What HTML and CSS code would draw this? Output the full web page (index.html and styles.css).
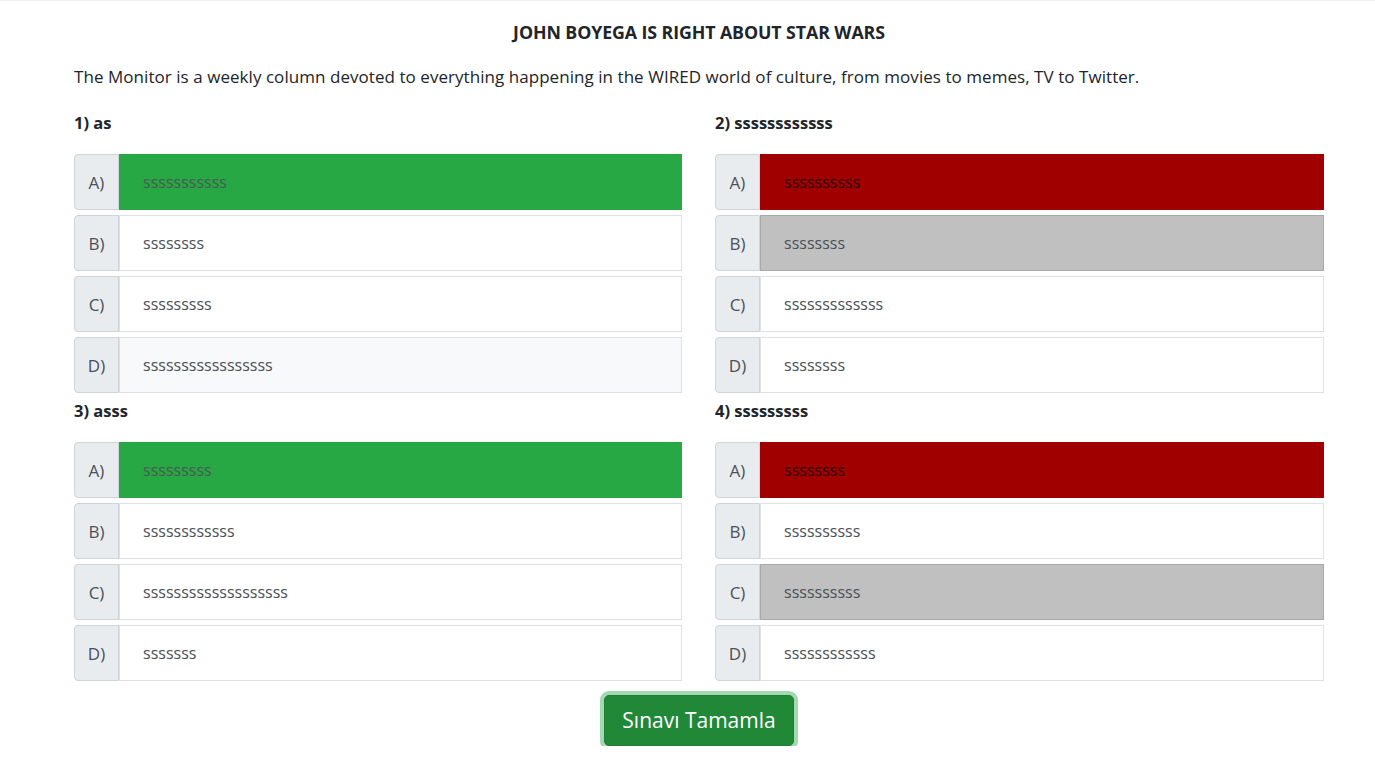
FILE: index.html
```html
<!DOCTYPE html>
<html lang="tr">
<head>
<meta charset="utf-8">
<title>Quiz</title>
<link rel="stylesheet" href="styles.css">
</head>
<body>
<div class="page">
  <h1 class="title">JOHN BOYEGA IS RIGHT ABOUT STAR WARS</h1>
  <p class="lead">The Monitor is a weekly column devoted to everything happening in the WIRED world of culture, from movies to memes, TV to Twitter.</p>
  <div class="grid">
    <div class="question">
      <div class="q-title">1) as</div>
      <div class="opts">
        <div class="opt"><span class="lbl">A)</span><span class="ans correct">sssssssssss</span></div>
        <div class="opt"><span class="lbl">B)</span><span class="ans">ssssssss</span></div>
        <div class="opt"><span class="lbl">C)</span><span class="ans">sssssssss</span></div>
        <div class="opt"><span class="lbl">D)</span><span class="ans muted">sssssssssssssssss</span></div>
      </div>
    </div>
    <div class="question">
      <div class="q-title">2) ssssssssssss</div>
      <div class="opts">
        <div class="opt"><span class="lbl">A)</span><span class="ans wrong">ssssssssss</span></div>
        <div class="opt"><span class="lbl">B)</span><span class="ans chosen">ssssssss</span></div>
        <div class="opt"><span class="lbl">C)</span><span class="ans">sssssssssssss</span></div>
        <div class="opt"><span class="lbl">D)</span><span class="ans">ssssssss</span></div>
      </div>
    </div>
    <div class="question">
      <div class="q-title">3) asss</div>
      <div class="opts">
        <div class="opt"><span class="lbl">A)</span><span class="ans correct">sssssssss</span></div>
        <div class="opt"><span class="lbl">B)</span><span class="ans">ssssssssssss</span></div>
        <div class="opt"><span class="lbl">C)</span><span class="ans">sssssssssssssssssss</span></div>
        <div class="opt"><span class="lbl">D)</span><span class="ans">sssssss</span></div>
      </div>
    </div>
    <div class="question">
      <div class="q-title">4) sssssssss</div>
      <div class="opts">
        <div class="opt"><span class="lbl">A)</span><span class="ans wrong">ssssssss</span></div>
        <div class="opt"><span class="lbl">B)</span><span class="ans">ssssssssss</span></div>
        <div class="opt"><span class="lbl">C)</span><span class="ans chosen">ssssssssss</span></div>
        <div class="opt"><span class="lbl">D)</span><span class="ans">ssssssssssss</span></div>
      </div>
    </div>
  </div>
  <div class="actions">
    <button class="btn-finish" type="button">Sınavı Tamamla</button>
  </div>
</div>
</body>
</html>
```
FILE: styles.css
```css
html, body {
  margin: 0;
  padding: 0;
  background: #fff;
}
body {
  font-family: "Open Sans", "Noto Sans", sans-serif;
  color: #212529;
  border-top: 1px solid #eceef0;
  padding-left: 23px;
}
.page {
  width: 1250px;
  margin: 0 auto;
  padding-top: 19px;
}
.title {
  margin: 0;
  font-size: 17.8px;
  line-height: 24px;
  font-weight: 700;
  text-align: center;
  letter-spacing: -0.1px;
}
.lead {
  margin: 21px 0 0;
  font-size: 17px;
  line-height: 24px;
  letter-spacing: 0.05px;
}
.grid {
  display: grid;
  grid-template-columns: 608px 609px;
  column-gap: 33px;
  row-gap: 6px;
  margin-top: 22px;
}
.q-title {
  font-size: 16.5px;
  line-height: 24px;
  font-weight: 700;
}
.opts {
  display: flex;
  flex-direction: column;
  gap: 5px;
  margin-top: 19px;
}
.opt {
  display: flex;
  height: 56px;
}
.lbl {
  width: 45px;
  flex: none;
  display: flex;
  align-items: center;
  justify-content: center;
  background: #e9ecef;
  border: 1px solid #ced4da;
  border-radius: 4px 0 0 4px;
  box-sizing: border-box;
  color: #495057;
  font-size: 17px;
}
.ans {
  flex: 1;
  display: flex;
  align-items: center;
  box-sizing: border-box;
  border: 1px solid #dee2e6;
  padding-left: 23px;
  color: #495057;
  font-size: 16px;
}
.ans.correct {
  background: #28a745;
  border-color: #28a745;
  color: #4a5a50;
}
.ans.wrong {
  background: #a00000;
  border-color: #a00000;
  color: #2a0000;
}
.ans.chosen {
  background: #c0c0c0;
  border-color: #a9a9a9;
  color: #495057;
}
.ans.muted {
  background: #f8f9fa;
}
.actions {
  display: flex;
  justify-content: center;
  margin-top: 14px;
}
.btn-finish {
  font-family: inherit;
  font-size: 21px;
  line-height: 31px;
  padding: 9px 17px;
  color: #fff;
  background: #218838;
  border: 1px solid #1e7e34;
  border-radius: 5px;
  box-shadow: 0 0 0 4px rgba(72, 180, 97, 0.5);
}
```
